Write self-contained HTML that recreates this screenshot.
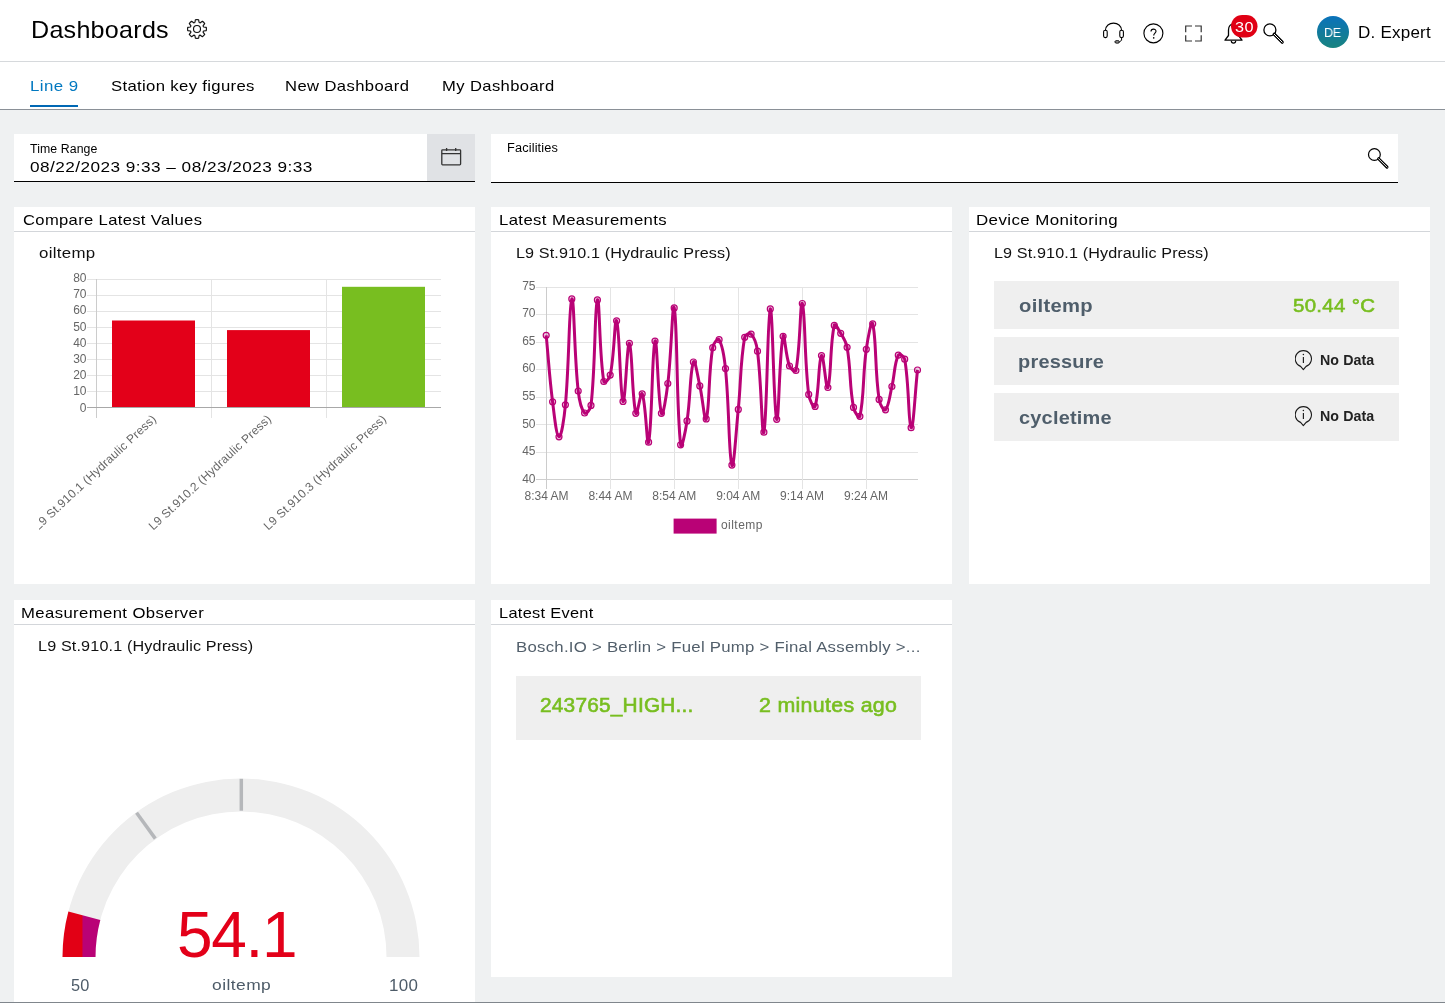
<!DOCTYPE html>
<html><head><meta charset="utf-8"><style>
html,body{margin:0;padding:0;}
body{width:1445px;height:1005px;overflow:hidden;position:relative;background:#eff1f2;font-family:"Liberation Sans",sans-serif;}
.t{position:absolute;white-space:nowrap;line-height:1;will-change:transform;}
.r{position:absolute;will-change:transform;}
svg text{font-family:"Liberation Sans",sans-serif;}
</style></head><body>
<div class="r" style="left:0px;top:0px;width:1445px;height:61px;background:#fff;"></div>
<div class="r" style="left:0px;top:61px;width:1445px;height:1px;background:#d6d9dc;"></div>
<div class="r" style="left:0px;top:62px;width:1445px;height:47px;background:#fff;"></div>
<div class="r" style="left:0px;top:109px;width:1445px;height:1px;background:#8a9097;"></div>
<div class="r" style="left:30px;top:105px;width:48px;height:2px;background:#0068b4;"></div>
<div class="t" style="left:30.76px;top:18px;font-size:24px;font-weight:400;color:#000;letter-spacing:0.261px;transform:scaleX(1.0446);transform-origin:0 0;">Dashboards</div>
<svg class="r" style="left:187.1px;top:19.2px;overflow:visible" width="20" height="20" viewBox="0 0 20 20"><path d="M7.95,3.31 L8.37,0.74 A9.4,9.4 0 0 1 11.63,0.74 L12.05,3.31 Q12.49,3.99 13.29,3.82 L15.39,2.30 A9.4,9.4 0 0 1 17.70,4.61 L16.18,6.71 Q16.01,7.51 16.69,7.95 L19.26,8.37 A9.4,9.4 0 0 1 19.26,11.63 L16.69,12.05 Q16.01,12.49 16.18,13.29 L17.70,15.39 A9.4,9.4 0 0 1 15.39,17.70 L13.29,16.18 Q12.49,16.01 12.05,16.69 L11.63,19.26 A9.4,9.4 0 0 1 8.37,19.26 L7.95,16.69 Q7.51,16.01 6.71,16.18 L4.61,17.70 A9.4,9.4 0 0 1 2.30,15.39 L3.82,13.29 Q3.99,12.49 3.31,12.05 L0.74,11.63 A9.4,9.4 0 0 1 0.74,8.37 L3.31,7.95 Q3.99,7.51 3.82,6.71 L2.30,4.61 A9.4,9.4 0 0 1 4.61,2.30 L6.71,3.82 Q7.51,3.99 7.95,3.31 Z" fill="none" stroke="#111" stroke-width="1.15" stroke-linejoin="round"/><circle cx="10" cy="10" r="3.5" fill="none" stroke="#111" stroke-width="1.15"/></svg>
<div class="t" style="left:29.68px;top:78px;font-size:15px;font-weight:400;color:#0078c0;letter-spacing:0.372px;transform:scaleX(1.1235);transform-origin:0 0;">Line 9</div>
<div class="t" style="left:110.50px;top:78px;font-size:15px;font-weight:400;color:#000;letter-spacing:0.299px;transform:scaleX(1.1139);transform-origin:0 0;">Station key figures</div>
<div class="t" style="left:285.49px;top:78px;font-size:15px;font-weight:400;color:#000;letter-spacing:0.366px;transform:scaleX(1.1067);transform-origin:0 0;">New Dashboard</div>
<div class="t" style="left:441.59px;top:78px;font-size:15px;font-weight:400;color:#000;letter-spacing:0.358px;transform:scaleX(1.1055);transform-origin:0 0;">My Dashboard</div>
<svg class="r" style="left:1100px;top:20px" width="28" height="26" viewBox="1100 20 28 26"><path d="M1105.4,30.6 C1105.4,20.6 1121.6,20.6 1121.6,30.6" fill="none" stroke="#000" stroke-width="1.1"/><rect x="1103.6" y="30.2" width="3.6" height="7.4" rx="1.6" fill="none" stroke="#000" stroke-width="1.1"/><rect x="1119.8" y="30.2" width="3.6" height="7.4" rx="1.6" fill="none" stroke="#000" stroke-width="1.1"/><path d="M1121.6,37.6 L1121.6,40.3 L1119.8,41.6" fill="none" stroke="#000" stroke-width="1.0"/><ellipse cx="1117.2" cy="41.9" rx="2.4" ry="1.3" fill="#999" stroke="#000" stroke-width="0.9"/></svg>
<svg class="r" style="left:1140px;top:20px" width="28" height="28" viewBox="1140 20 28 28"><circle cx="1153.4" cy="33.3" r="9.5" fill="none" stroke="#000" stroke-width="1.15"/><path d="M1151,31.4 C1151,28.4 1156,28.4 1156,31.2 C1156,33 1153.7,33.3 1153.7,35.6" fill="none" stroke="#000" stroke-width="1.15"/><circle cx="1153.7" cy="37.9" r="0.8" fill="#000"/></svg>
<svg class="r" style="left:1182px;top:22px" width="24" height="24" viewBox="1182 22 24 24"><path d="M1185.7,32.2 V26 H1192 M1195,26 H1201.2 V32.2 M1201.2,35.2 V41 H1195 M1192,41 H1185.7 V35.2" fill="none" stroke="#333" stroke-width="1.2"/></svg>
<svg class="r" style="left:1220px;top:14px" width="45" height="32" viewBox="1220 14 45 32"><path d="M1225,40.2 L1228.5,35.5 V30 C1228.5,22 1238.5,22 1238.5,30 V35.5 L1242,40.2 Z" fill="none" stroke="#000" stroke-width="1.3" stroke-linejoin="round"/><path d="M1231.3,40.8 C1231.3,44 1235.7,44 1235.7,40.8" fill="none" stroke="#000" stroke-width="1.2"/><rect x="1231" y="15" width="26.5" height="22.5" rx="11.25" fill="#e00014"/></svg>
<div class="t" style="left:1235.00px;top:19px;font-size:15.5px;font-weight:400;color:#fff;letter-spacing:0.338px;transform:scaleX(1.0469);transform-origin:0 0;">30</div>
<svg class="r" style="left:1260px;top:20px" width="28" height="28" viewBox="1260 20 28 28"><circle cx="1269.9" cy="29.9" r="6" fill="none" stroke="#000" stroke-width="1.3"/><path d="M1274.2,34.2 L1282.2,42.2" stroke="#000" stroke-width="3.2" stroke-linecap="round"/><path d="M1274.2,34.2 L1282.2,42.2" stroke="#fff" stroke-width="1.0" stroke-linecap="round"/></svg>
<svg class="r" style="left:1317px;top:16px" width="32" height="32"><defs><linearGradient id="av" x1="0" y1="0" x2="0" y2="1"><stop offset="0" stop-color="#0a72bb"/><stop offset="1" stop-color="#18837f"/></linearGradient></defs><circle cx="16" cy="16" r="16" fill="url(#av)"/></svg>
<div class="t" style="left:1324.34px;top:26px;font-size:13px;font-weight:400;color:#fff;letter-spacing:-0.276px;transform:scaleX(0.9642);transform-origin:0 0;">DE</div>
<div class="t" style="left:1357.74px;top:25px;font-size:16px;font-weight:400;color:#000;letter-spacing:0.210px;transform:scaleX(1.0630);transform-origin:0 0;">D. Expert</div>
<div class="r" style="left:14px;top:134px;width:461px;height:47px;background:#fff;"></div>
<div class="r" style="left:427px;top:134px;width:48px;height:47px;background:#e0e2e5;"></div>
<div class="r" style="left:14px;top:181px;width:461px;height:1px;background:#000;"></div>
<div class="t" style="left:29.90px;top:143px;font-size:12px;font-weight:400;color:#000;letter-spacing:0.080px;transform:scaleX(1.0264);transform-origin:0 0;">Time Range</div>
<div class="t" style="left:30.30px;top:159px;font-size:15px;font-weight:400;color:#000;letter-spacing:0.398px;transform:scaleX(1.1462);transform-origin:0 0;">08/22/2023 9:33 – 08/23/2023 9:33</div>
<svg class="r" style="left:436px;top:142px" width="30" height="30" viewBox="436 142 30 30"><rect x="441.8" y="149.8" width="18.8" height="15" rx="0.8" fill="none" stroke="#333" stroke-width="1.3"/><path d="M441.8,153.6 H460.6 M446.6,148 V151 M455.7,148 V151" stroke="#333" stroke-width="1.3"/></svg>
<div class="r" style="left:491px;top:134px;width:907px;height:48px;background:#fff;"></div>
<div class="r" style="left:491px;top:182px;width:907px;height:1px;background:#000;"></div>
<div class="t" style="left:506.80px;top:142px;font-size:12px;font-weight:400;color:#000;letter-spacing:0.132px;transform:scaleX(1.0634);transform-origin:0 0;">Facilities</div>
<svg class="r" style="left:1362px;top:142px" width="32" height="32" viewBox="1362 142 32 32"><circle cx="1374.4" cy="154.5" r="5.9" fill="none" stroke="#000" stroke-width="1.2"/><path d="M1378.6,158.7 L1387,167.1" stroke="#000" stroke-width="3.0" stroke-linecap="round"/><path d="M1378.6,158.7 L1387,167.1" stroke="#fff" stroke-width="0.9" stroke-linecap="round"/></svg>
<div class="r" style="left:14px;top:207px;width:461px;height:377px;background:#fff;"></div>
<div class="r" style="left:14px;top:231px;width:461px;height:1px;background:#d3d6da;"></div>
<div class="t" style="left:22.60px;top:212px;font-size:15px;font-weight:400;color:#000;letter-spacing:0.316px;transform:scaleX(1.1050);transform-origin:0 0;">Compare Latest Values</div>
<div class="r" style="left:491px;top:207px;width:461px;height:377px;background:#fff;"></div>
<div class="r" style="left:491px;top:231px;width:461px;height:1px;background:#d3d6da;"></div>
<div class="t" style="left:498.89px;top:212px;font-size:15px;font-weight:400;color:#000;letter-spacing:0.348px;transform:scaleX(1.1141);transform-origin:0 0;">Latest Measurements</div>
<div class="r" style="left:969px;top:207px;width:461px;height:377px;background:#fff;"></div>
<div class="r" style="left:969px;top:231px;width:461px;height:1px;background:#d3d6da;"></div>
<div class="t" style="left:976.47px;top:212px;font-size:15px;font-weight:400;color:#000;letter-spacing:0.358px;transform:scaleX(1.1267);transform-origin:0 0;">Device Monitoring</div>
<div class="r" style="left:14px;top:600px;width:461px;height:402px;background:#fff;"></div>
<div class="r" style="left:14px;top:624px;width:461px;height:1px;background:#d3d6da;"></div>
<div class="t" style="left:21.49px;top:605px;font-size:15px;font-weight:400;color:#000;letter-spacing:0.357px;transform:scaleX(1.1124);transform-origin:0 0;">Measurement Observer</div>
<div class="r" style="left:491px;top:600px;width:461px;height:377px;background:#fff;"></div>
<div class="r" style="left:491px;top:624px;width:461px;height:1px;background:#d3d6da;"></div>
<div class="t" style="left:498.91px;top:605px;font-size:15px;font-weight:400;color:#000;letter-spacing:0.272px;transform:scaleX(1.0915);transform-origin:0 0;">Latest Event</div>
<div class="t" style="left:39.20px;top:245px;font-size:15.5px;font-weight:400;color:#111;letter-spacing:0.283px;transform:scaleX(1.0873);transform-origin:0 0;">oiltemp</div>
<div class="t" style="left:515.56px;top:245px;font-size:15.5px;font-weight:400;color:#111;letter-spacing:0.124px;transform:scaleX(1.0418);transform-origin:0 0;">L9 St.910.1 (Hydraulic Press)</div>
<div class="t" style="left:993.86px;top:245px;font-size:15.5px;font-weight:400;color:#111;letter-spacing:0.124px;transform:scaleX(1.0418);transform-origin:0 0;">L9 St.910.1 (Hydraulic Press)</div>
<div class="t" style="left:38.16px;top:638px;font-size:15.5px;font-weight:400;color:#111;letter-spacing:0.130px;transform:scaleX(1.0442);transform-origin:0 0;">L9 St.910.1 (Hydraulic Press)</div>
<svg class="r" style="left:0;top:0" width="480" height="590" viewBox="0 0 480 590"><defs><clipPath id="bc"><rect x="39" y="240" width="440" height="340"/></clipPath></defs><line x1="87" y1="279.5" x2="441" y2="279.5" stroke="#e4e4e4" stroke-width="1"/><line x1="87" y1="295.5" x2="441" y2="295.5" stroke="#e4e4e4" stroke-width="1"/><line x1="87" y1="311.5" x2="441" y2="311.5" stroke="#e4e4e4" stroke-width="1"/><line x1="87" y1="327.5" x2="441" y2="327.5" stroke="#e4e4e4" stroke-width="1"/><line x1="87" y1="343.5" x2="441" y2="343.5" stroke="#e4e4e4" stroke-width="1"/><line x1="87" y1="359.5" x2="441" y2="359.5" stroke="#e4e4e4" stroke-width="1"/><line x1="87" y1="375.5" x2="441" y2="375.5" stroke="#e4e4e4" stroke-width="1"/><line x1="87" y1="391.5" x2="441" y2="391.5" stroke="#e4e4e4" stroke-width="1"/><line x1="96.5" y1="279" x2="96.5" y2="418" stroke="#cccccc" stroke-width="1"/><line x1="211.5" y1="279" x2="211.5" y2="418" stroke="#e4e4e4" stroke-width="1"/><line x1="326.5" y1="279" x2="326.5" y2="418" stroke="#e4e4e4" stroke-width="1"/><line x1="87" y1="407.5" x2="441" y2="407.5" stroke="#a8a8a8" stroke-width="1"/><text x="86.5" y="282.05" text-anchor="end" font-size="12" fill="#666">80</text><text x="86.5" y="298.24" text-anchor="end" font-size="12" fill="#666">70</text><text x="86.5" y="314.43" text-anchor="end" font-size="12" fill="#666">60</text><text x="86.5" y="330.62" text-anchor="end" font-size="12" fill="#666">50</text><text x="86.5" y="346.81" text-anchor="end" font-size="12" fill="#666">40</text><text x="86.5" y="363.00" text-anchor="end" font-size="12" fill="#666">30</text><text x="86.5" y="379.19" text-anchor="end" font-size="12" fill="#666">20</text><text x="86.5" y="395.38" text-anchor="end" font-size="12" fill="#666">10</text><text x="86.5" y="411.57" text-anchor="end" font-size="12" fill="#666">0</text><rect x="112" y="320.5" width="83.0" height="86.5" fill="#e30019"/><rect x="227" y="330.1" width="83.0" height="76.9" fill="#e30019"/><rect x="342" y="286.8" width="83.0" height="120.2" fill="#78be20"/><g clip-path="url(#bc)"><text x="155" y="417.5" text-anchor="end" font-size="12" fill="#666" letter-spacing="0.2" transform="rotate(-43 155 417.5)" dominant-baseline="middle">L9 St.910.1 (Hydraulic Press)</text><text x="270" y="417.5" text-anchor="end" font-size="12" fill="#666" letter-spacing="0.2" transform="rotate(-43 270 417.5)" dominant-baseline="middle">L9 St.910.2 (Hydraulic Press)</text><text x="385" y="417.5" text-anchor="end" font-size="12" fill="#666" letter-spacing="0.2" transform="rotate(-43 385 417.5)" dominant-baseline="middle">L9 St.910.3 (Hydraulic Press)</text></g></svg>
<svg class="r" style="left:480px;top:260px" width="470" height="290" viewBox="480 260 470 290"><line x1="536" y1="287.5" x2="918" y2="287.5" stroke="#e4e4e4" stroke-width="1"/><text x="535.5" y="289.7" text-anchor="end" font-size="12" fill="#666">75</text><line x1="536" y1="314.5" x2="918" y2="314.5" stroke="#e4e4e4" stroke-width="1"/><text x="535.5" y="317.3" text-anchor="end" font-size="12" fill="#666">70</text><line x1="536" y1="342.5" x2="918" y2="342.5" stroke="#e4e4e4" stroke-width="1"/><text x="535.5" y="344.8" text-anchor="end" font-size="12" fill="#666">65</text><line x1="536" y1="369.5" x2="918" y2="369.5" stroke="#e4e4e4" stroke-width="1"/><text x="535.5" y="372.4" text-anchor="end" font-size="12" fill="#666">60</text><line x1="536" y1="397.5" x2="918" y2="397.5" stroke="#e4e4e4" stroke-width="1"/><text x="535.5" y="400.0" text-anchor="end" font-size="12" fill="#666">55</text><line x1="536" y1="424.5" x2="918" y2="424.5" stroke="#e4e4e4" stroke-width="1"/><text x="535.5" y="427.6" text-anchor="end" font-size="12" fill="#666">50</text><line x1="536" y1="452.5" x2="918" y2="452.5" stroke="#e4e4e4" stroke-width="1"/><text x="535.5" y="455.1" text-anchor="end" font-size="12" fill="#666">45</text><line x1="536" y1="479.5" x2="918" y2="479.5" stroke="#cfcfcf" stroke-width="1"/><text x="535.5" y="482.7" text-anchor="end" font-size="12" fill="#666">40</text><line x1="546.5" y1="287" x2="546.5" y2="489" stroke="#cccccc" stroke-width="1"/><text x="546.5" y="500" text-anchor="middle" font-size="12" fill="#666">8:34 AM</text><line x1="610.5" y1="287" x2="610.5" y2="489" stroke="#e4e4e4" stroke-width="1"/><text x="610.4" y="500" text-anchor="middle" font-size="12" fill="#666">8:44 AM</text><line x1="674.5" y1="287" x2="674.5" y2="489" stroke="#e4e4e4" stroke-width="1"/><text x="674.3" y="500" text-anchor="middle" font-size="12" fill="#666">8:54 AM</text><line x1="738.5" y1="287" x2="738.5" y2="489" stroke="#e4e4e4" stroke-width="1"/><text x="738.2" y="500" text-anchor="middle" font-size="12" fill="#666">9:04 AM</text><line x1="802.5" y1="287" x2="802.5" y2="489" stroke="#e4e4e4" stroke-width="1"/><text x="802.1" y="500" text-anchor="middle" font-size="12" fill="#666">9:14 AM</text><line x1="866.5" y1="287" x2="866.5" y2="489" stroke="#e4e4e4" stroke-width="1"/><text x="866.0" y="500" text-anchor="middle" font-size="12" fill="#666">9:24 AM</text><path d="M546.20,335.30 C548.76,361.90 549.26,375.31 552.60,401.80 C554.38,415.91 556.33,436.17 559.00,436.80 C561.45,437.37 564.20,417.78 565.41,404.80 C569.32,362.62 569.07,301.85 571.81,298.90 C574.19,296.33 574.11,354.43 578.21,391.00 C579.23,400.07 581.04,408.98 584.61,413.00 C586.16,414.74 590.57,409.29 591.01,405.40 C595.70,364.05 594.53,305.29 597.42,299.90 C599.65,295.73 599.21,354.42 603.82,381.50 C604.33,384.50 609.49,378.55 610.22,375.10 C614.61,354.27 614.56,316.56 616.62,320.80 C619.68,327.08 620.05,396.18 623.02,401.40 C625.17,405.18 627.10,341.14 629.43,343.30 C632.22,345.90 631.86,397.67 635.83,413.30 C636.99,417.87 640.71,390.38 642.23,393.80 C645.84,401.94 646.97,449.06 648.63,442.20 C652.09,427.98 652.05,347.84 655.03,341.10 C657.17,336.28 657.83,401.36 661.44,413.30 C662.95,418.32 666.37,395.58 667.84,383.50 C671.49,353.42 672.42,299.16 674.24,307.90 C677.54,323.68 676.30,406.51 680.64,444.80 C681.43,451.71 685.54,430.66 687.04,420.90 C690.66,397.54 689.83,371.88 693.45,362.00 C694.95,357.88 697.68,376.25 699.85,385.90 C702.80,399.01 704.61,423.79 706.25,418.90 C709.73,408.51 708.17,375.41 712.65,347.70 C713.29,343.73 717.74,337.55 719.05,339.70 C722.86,345.91 724.26,356.85 725.46,368.60 C729.38,407.01 728.62,454.77 731.86,465.10 C733.74,471.09 736.02,431.71 738.26,409.40 C741.15,380.59 740.00,364.71 744.66,337.30 C745.12,334.59 749.62,332.53 751.06,334.10 C754.74,338.09 756.53,344.00 757.47,351.20 C761.65,383.24 761.84,438.92 763.87,432.20 C766.96,422.00 767.57,311.62 770.27,308.90 C772.69,306.46 773.75,413.05 776.67,419.30 C778.87,424.01 779.32,351.92 783.07,336.30 C784.44,330.60 785.40,355.12 789.48,366.00 C790.52,368.80 795.34,373.10 795.88,370.50 C800.47,348.10 800.10,299.44 802.28,303.50 C805.23,309.00 804.23,358.59 808.68,394.40 C809.35,399.75 814.01,409.66 815.08,406.40 C819.13,394.14 818.35,360.22 821.49,355.60 C823.48,352.66 826.13,391.64 827.89,387.50 C831.25,379.56 829.89,344.04 834.29,325.40 C835.01,322.36 838.65,329.82 840.69,333.30 C843.78,338.58 846.05,341.28 847.09,347.30 C851.18,370.92 849.16,384.04 853.50,407.40 C854.28,411.64 859.18,419.56 859.90,416.30 C864.30,396.32 862.62,375.91 866.30,349.30 C867.74,338.91 871.38,318.64 872.70,323.80 C876.51,338.68 874.69,369.77 879.10,399.40 C879.81,404.17 883.79,411.53 885.51,409.80 C888.91,406.37 889.70,395.91 891.91,386.50 C894.82,374.07 894.17,364.03 898.31,355.20 C899.29,353.11 904.21,356.33 904.71,359.20 C909.33,385.33 908.34,425.36 911.11,427.70 C913.46,429.68 914.96,393.08 917.52,370.00" fill="none" stroke="#b90276" stroke-width="3"/><circle cx="546.2" cy="335.3" r="3" fill="rgba(185,2,118,0.2)" stroke="#b90276" stroke-width="1.2"/><circle cx="552.6" cy="401.8" r="3" fill="rgba(185,2,118,0.2)" stroke="#b90276" stroke-width="1.2"/><circle cx="559.0" cy="436.8" r="3" fill="rgba(185,2,118,0.2)" stroke="#b90276" stroke-width="1.2"/><circle cx="565.4" cy="404.8" r="3" fill="rgba(185,2,118,0.2)" stroke="#b90276" stroke-width="1.2"/><circle cx="571.8" cy="298.9" r="3" fill="rgba(185,2,118,0.2)" stroke="#b90276" stroke-width="1.2"/><circle cx="578.2" cy="391.0" r="3" fill="rgba(185,2,118,0.2)" stroke="#b90276" stroke-width="1.2"/><circle cx="584.6" cy="413.0" r="3" fill="rgba(185,2,118,0.2)" stroke="#b90276" stroke-width="1.2"/><circle cx="591.0" cy="405.4" r="3" fill="rgba(185,2,118,0.2)" stroke="#b90276" stroke-width="1.2"/><circle cx="597.4" cy="299.9" r="3" fill="rgba(185,2,118,0.2)" stroke="#b90276" stroke-width="1.2"/><circle cx="603.8" cy="381.5" r="3" fill="rgba(185,2,118,0.2)" stroke="#b90276" stroke-width="1.2"/><circle cx="610.2" cy="375.1" r="3" fill="rgba(185,2,118,0.2)" stroke="#b90276" stroke-width="1.2"/><circle cx="616.6" cy="320.8" r="3" fill="rgba(185,2,118,0.2)" stroke="#b90276" stroke-width="1.2"/><circle cx="623.0" cy="401.4" r="3" fill="rgba(185,2,118,0.2)" stroke="#b90276" stroke-width="1.2"/><circle cx="629.4" cy="343.3" r="3" fill="rgba(185,2,118,0.2)" stroke="#b90276" stroke-width="1.2"/><circle cx="635.8" cy="413.3" r="3" fill="rgba(185,2,118,0.2)" stroke="#b90276" stroke-width="1.2"/><circle cx="642.2" cy="393.8" r="3" fill="rgba(185,2,118,0.2)" stroke="#b90276" stroke-width="1.2"/><circle cx="648.6" cy="442.2" r="3" fill="rgba(185,2,118,0.2)" stroke="#b90276" stroke-width="1.2"/><circle cx="655.0" cy="341.1" r="3" fill="rgba(185,2,118,0.2)" stroke="#b90276" stroke-width="1.2"/><circle cx="661.4" cy="413.3" r="3" fill="rgba(185,2,118,0.2)" stroke="#b90276" stroke-width="1.2"/><circle cx="667.8" cy="383.5" r="3" fill="rgba(185,2,118,0.2)" stroke="#b90276" stroke-width="1.2"/><circle cx="674.2" cy="307.9" r="3" fill="rgba(185,2,118,0.2)" stroke="#b90276" stroke-width="1.2"/><circle cx="680.6" cy="444.8" r="3" fill="rgba(185,2,118,0.2)" stroke="#b90276" stroke-width="1.2"/><circle cx="687.0" cy="420.9" r="3" fill="rgba(185,2,118,0.2)" stroke="#b90276" stroke-width="1.2"/><circle cx="693.4" cy="362.0" r="3" fill="rgba(185,2,118,0.2)" stroke="#b90276" stroke-width="1.2"/><circle cx="699.8" cy="385.9" r="3" fill="rgba(185,2,118,0.2)" stroke="#b90276" stroke-width="1.2"/><circle cx="706.2" cy="418.9" r="3" fill="rgba(185,2,118,0.2)" stroke="#b90276" stroke-width="1.2"/><circle cx="712.7" cy="347.7" r="3" fill="rgba(185,2,118,0.2)" stroke="#b90276" stroke-width="1.2"/><circle cx="719.1" cy="339.7" r="3" fill="rgba(185,2,118,0.2)" stroke="#b90276" stroke-width="1.2"/><circle cx="725.5" cy="368.6" r="3" fill="rgba(185,2,118,0.2)" stroke="#b90276" stroke-width="1.2"/><circle cx="731.9" cy="465.1" r="3" fill="rgba(185,2,118,0.2)" stroke="#b90276" stroke-width="1.2"/><circle cx="738.3" cy="409.4" r="3" fill="rgba(185,2,118,0.2)" stroke="#b90276" stroke-width="1.2"/><circle cx="744.7" cy="337.3" r="3" fill="rgba(185,2,118,0.2)" stroke="#b90276" stroke-width="1.2"/><circle cx="751.1" cy="334.1" r="3" fill="rgba(185,2,118,0.2)" stroke="#b90276" stroke-width="1.2"/><circle cx="757.5" cy="351.2" r="3" fill="rgba(185,2,118,0.2)" stroke="#b90276" stroke-width="1.2"/><circle cx="763.9" cy="432.2" r="3" fill="rgba(185,2,118,0.2)" stroke="#b90276" stroke-width="1.2"/><circle cx="770.3" cy="308.9" r="3" fill="rgba(185,2,118,0.2)" stroke="#b90276" stroke-width="1.2"/><circle cx="776.7" cy="419.3" r="3" fill="rgba(185,2,118,0.2)" stroke="#b90276" stroke-width="1.2"/><circle cx="783.1" cy="336.3" r="3" fill="rgba(185,2,118,0.2)" stroke="#b90276" stroke-width="1.2"/><circle cx="789.5" cy="366.0" r="3" fill="rgba(185,2,118,0.2)" stroke="#b90276" stroke-width="1.2"/><circle cx="795.9" cy="370.5" r="3" fill="rgba(185,2,118,0.2)" stroke="#b90276" stroke-width="1.2"/><circle cx="802.3" cy="303.5" r="3" fill="rgba(185,2,118,0.2)" stroke="#b90276" stroke-width="1.2"/><circle cx="808.7" cy="394.4" r="3" fill="rgba(185,2,118,0.2)" stroke="#b90276" stroke-width="1.2"/><circle cx="815.1" cy="406.4" r="3" fill="rgba(185,2,118,0.2)" stroke="#b90276" stroke-width="1.2"/><circle cx="821.5" cy="355.6" r="3" fill="rgba(185,2,118,0.2)" stroke="#b90276" stroke-width="1.2"/><circle cx="827.9" cy="387.5" r="3" fill="rgba(185,2,118,0.2)" stroke="#b90276" stroke-width="1.2"/><circle cx="834.3" cy="325.4" r="3" fill="rgba(185,2,118,0.2)" stroke="#b90276" stroke-width="1.2"/><circle cx="840.7" cy="333.3" r="3" fill="rgba(185,2,118,0.2)" stroke="#b90276" stroke-width="1.2"/><circle cx="847.1" cy="347.3" r="3" fill="rgba(185,2,118,0.2)" stroke="#b90276" stroke-width="1.2"/><circle cx="853.5" cy="407.4" r="3" fill="rgba(185,2,118,0.2)" stroke="#b90276" stroke-width="1.2"/><circle cx="859.9" cy="416.3" r="3" fill="rgba(185,2,118,0.2)" stroke="#b90276" stroke-width="1.2"/><circle cx="866.3" cy="349.3" r="3" fill="rgba(185,2,118,0.2)" stroke="#b90276" stroke-width="1.2"/><circle cx="872.7" cy="323.8" r="3" fill="rgba(185,2,118,0.2)" stroke="#b90276" stroke-width="1.2"/><circle cx="879.1" cy="399.4" r="3" fill="rgba(185,2,118,0.2)" stroke="#b90276" stroke-width="1.2"/><circle cx="885.5" cy="409.8" r="3" fill="rgba(185,2,118,0.2)" stroke="#b90276" stroke-width="1.2"/><circle cx="891.9" cy="386.5" r="3" fill="rgba(185,2,118,0.2)" stroke="#b90276" stroke-width="1.2"/><circle cx="898.3" cy="355.2" r="3" fill="rgba(185,2,118,0.2)" stroke="#b90276" stroke-width="1.2"/><circle cx="904.7" cy="359.2" r="3" fill="rgba(185,2,118,0.2)" stroke="#b90276" stroke-width="1.2"/><circle cx="911.1" cy="427.7" r="3" fill="rgba(185,2,118,0.2)" stroke="#b90276" stroke-width="1.2"/><circle cx="917.5" cy="370.0" r="3" fill="rgba(185,2,118,0.2)" stroke="#b90276" stroke-width="1.2"/><rect x="673.6" y="518.6" width="43" height="15" fill="#b90276"/><text x="721" y="528.6" font-size="12" fill="#666" letter-spacing="0.45">oiltemp</text></svg>
<div class="r" style="left:994px;top:281px;width:405px;height:48px;background:#efefef;"></div>
<div class="t" style="left:1019.00px;top:296px;font-size:19px;font-weight:700;color:#4f5e6b;letter-spacing:0.284px;transform:scaleX(1.0632);transform-origin:0 0;">oiltemp</div>
<div class="t" style="left:1292.80px;top:296px;font-size:19px;font-weight:400;color:#78be20;letter-spacing:0.310px;transform:scaleX(1.0741);transform-origin:0 0;-webkit-text-stroke:0.6px #78be20;">50.44 °C</div>
<div class="r" style="left:994px;top:337px;width:405px;height:48px;background:#efefef;"></div>
<div class="t" style="left:1017.95px;top:352px;font-size:19px;font-weight:700;color:#4f5e6b;letter-spacing:0.225px;transform:scaleX(1.0489);transform-origin:0 0;">pressure</div>
<svg class="r" style="left:1295.3px;top:349.3px" width="24" height="24" viewBox="0 0 24 24"><path d="M5.58,17.36 A8.1,8.1 0 1 1 11.12,17.36 L8.35,20.6 Z" fill="none" stroke="#1a1a1a" stroke-width="1.1" stroke-linejoin="round"/><path d="M8.4,7.9 V13.9" stroke="#1a1a1a" stroke-width="1.15"/><circle cx="8.4" cy="5.6" r="0.75" fill="#1a1a1a"/></svg>
<div class="t" style="left:1320.40px;top:353px;font-size:14px;font-weight:700;color:#222;letter-spacing:0.063px;transform:scaleX(1.0170);transform-origin:0 0;">No Data</div>
<div class="r" style="left:994px;top:393px;width:405px;height:48px;background:#efefef;"></div>
<div class="t" style="left:1019.00px;top:408px;font-size:19px;font-weight:700;color:#4f5e6b;letter-spacing:0.213px;transform:scaleX(1.0484);transform-origin:0 0;">cycletime</div>
<svg class="r" style="left:1295.3px;top:405.3px" width="24" height="24" viewBox="0 0 24 24"><path d="M5.58,17.36 A8.1,8.1 0 1 1 11.12,17.36 L8.35,20.6 Z" fill="none" stroke="#1a1a1a" stroke-width="1.1" stroke-linejoin="round"/><path d="M8.4,7.9 V13.9" stroke="#1a1a1a" stroke-width="1.15"/><circle cx="8.4" cy="5.6" r="0.75" fill="#1a1a1a"/></svg>
<div class="t" style="left:1320.40px;top:409px;font-size:14px;font-weight:700;color:#222;letter-spacing:0.063px;transform:scaleX(1.0170);transform-origin:0 0;">No Data</div>
<svg class="r" style="left:0;top:760px" width="480" height="210" viewBox="0 760 480 210"><defs><linearGradient id="gg" gradientUnits="userSpaceOnUse" x1="63" y1="0" x2="100" y2="0"><stop offset="0.5" stop-color="#e20015"/><stop offset="0.55" stop-color="#b90276"/></linearGradient></defs><path d="M62.50,957.00 A178.5,178.5 0 0 1 419.50,957.00 L386.50,957.00 A145.5,145.5 0 0 0 95.50,957.00 Z" fill="#eeeeee"/><path d="M62.50,957.00 A178.5,178.5 0 0 1 68.39,911.52 L100.30,919.93 A145.5,145.5 0 0 0 95.50,957.00 Z" fill="url(#gg)"/><line x1="155.31" y1="838.64" x2="136.56" y2="812.83" stroke="#b5b7ba" stroke-width="3.5"/><line x1="241.30" y1="810.70" x2="241.30" y2="778.80" stroke="#b5b7ba" stroke-width="3.5"/></svg>
<div class="t" style="left:177.00px;top:903px;font-size:64px;font-weight:400;color:#e30019;letter-spacing:-1.323px;/*NOSX*/">54.1</div>
<div class="t" style="left:70.60px;top:978px;font-size:16px;font-weight:400;color:#4d5b68;letter-spacing:0.148px;transform:scaleX(1.0196);transform-origin:0 0;">50</div>
<div class="t" style="left:212.30px;top:977px;font-size:15.5px;font-weight:400;color:#4d5b68;letter-spacing:0.389px;transform:scaleX(1.1242);transform-origin:0 0;">oiltemp</div>
<div class="t" style="left:388.84px;top:978px;font-size:16px;font-weight:400;color:#4d5b68;letter-spacing:0.312px;transform:scaleX(1.0598);transform-origin:0 0;">100</div>
<div class="t" style="left:515.82px;top:639px;font-size:15.5px;font-weight:400;color:#525f6b;letter-spacing:0.235px;transform:scaleX(1.0824);transform-origin:0 0;">Bosch.IO &gt; Berlin &gt; Fuel Pump &gt; Final Assembly &gt;...</div>
<div class="r" style="left:516px;top:676px;width:405px;height:64px;background:#efefef;"></div>
<div class="t" style="left:539.76px;top:695px;font-size:20px;font-weight:400;color:#78be20;letter-spacing:0.193px;transform:scaleX(1.0430);transform-origin:0 0;-webkit-text-stroke:0.6px #78be20;">243765_HIGH...</div>
<div class="t" style="left:758.73px;top:695px;font-size:20px;font-weight:400;color:#78be20;letter-spacing:0.285px;transform:scaleX(1.0685);transform-origin:0 0;-webkit-text-stroke:0.6px #78be20;">2 minutes ago</div>
<div class="r" style="left:0px;top:1002px;width:1445px;height:1px;background:#80868c;"></div>
<div class="r" style="left:0px;top:1003px;width:1445px;height:2px;background:#fff;"></div>
</body></html>
